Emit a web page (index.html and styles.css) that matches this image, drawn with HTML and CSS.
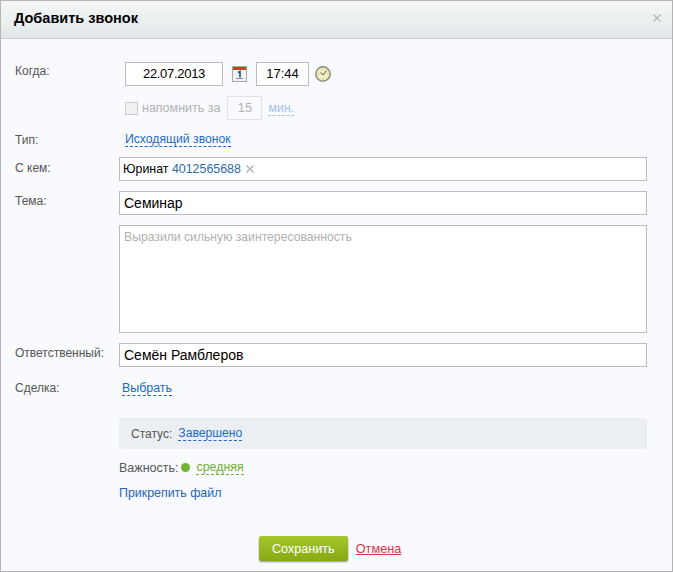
FILE: index.html
```html
<!DOCTYPE html>
<html lang="ru">
<head>
    <meta charset="UTF-8">
    <meta name="viewport" content="width=device-width, initial-scale=1.0">
    <title>Добавить звонок</title>
    <link rel="stylesheet" href="styles.css">
</head>
<body>
<div class="dialog">
    <div class="dialog-head">
        <h2>Добавить звонок</h2>
        <svg class="close-icon" width="8" height="8" viewBox="0 0 8 8">
            <path d="M.5.5l7 7M7.500.5l-7 7" stroke="#b5b5b5" stroke-width="1.200" fill="none"/>
        </svg>
    </div>

    <div class="dialog-body">
        <div class="row row-when">
            <label class="row-label">Когда:</label>
            <div class="when-fields">
                <div class="field field-date">22.07.2013</div>
                <svg class="cal-icon" width="15" height="16" viewBox="0 0 15 16">
                    <rect x=".5" y=".5" width="14" height="15" fill="#f2f2f2" stroke="#a9a9a9"/>
                    <rect x="1" y="1" width="13" height="3" fill="#d9391f"/>
                    <rect x="4" y="12" width="7" height="1" fill="#7d8fa8"/>
                    <path d="M6 6.500l2-1v6" stroke="#1f4f9c" stroke-width="1.600" fill="none"/>
                </svg>
                <div class="field field-time">17:44</div>
                <svg class="clock-icon" width="16" height="16" viewBox="0 0 16 16">
                    <circle cx="8" cy="8" r="7.200" fill="#f2eec0" stroke="#8b8b7e" stroke-width="1.500"/>
                    <path d="M8 9L5.500 6.500M8 9l3.500-4.500" stroke="#55554a" fill="none"/>
                    <path d="M8 2.500v1M8 12.500v1M2.500 8h1M12.500 8h1" stroke="#9a9a88" fill="none"/>
                </svg>
            </div>
        </div>

        <div class="row row-remind">
            <span class="row-label"></span>
            <div class="remind-fields">
                <span class="fake-check"></span>
                <span class="remind-text">напомнить за</span>
                <div class="remind-input">15</div>
                <a class="dash-link link-pale">мин.</a>
            </div>
        </div>

        <div class="row row-type">
            <label class="row-label">Тип:</label>
            <a class="dash-link">Исходящий звонок</a>
        </div>

        <div class="row row-field">
            <label class="row-label label-contact">С кем:</label>
            <div class="field field-wide field-contact">
                Юринат&nbsp;<span class="phone">4012565688</span>
                <svg class="tag-remove" width="8" height="8" viewBox="0 0 8 8">
                    <path d="M.5.500l7 7M7.500.500l-7 7" stroke="#a8adb3" stroke-width="1.200" fill="none"/>
                </svg>
            </div>
        </div>

        <div class="row row-field">
            <label class="row-label">Тема:</label>
            <div class="field field-wide field-big">Семинар</div>
        </div>

        <div class="row row-field">
            <span class="row-label"></span>
            <div class="field field-wide field-area">Выразили сильную заинтересованность</div>
        </div>

        <div class="row row-field">
            <label class="row-label">Ответственный:</label>
            <div class="field field-wide field-big">Семён Рамблеров</div>
        </div>

        <div class="row row-deal">
            <label class="row-label">Сделка:</label>
            <a class="dash-link">Выбрать</a>
        </div>

        <div class="status-bar">
            <span class="status-label">Статус:</span>
            <a class="dash-link">Завершено</a>
        </div>

        <div class="importance">
            <span class="status-label">Важность:</span>
            <span class="dot"></span>
            <a class="dash-link link-green">средняя</a>
        </div>

        <a class="attach-link">Прикрепить файл</a>

        <div class="buttons">
            <button class="save-btn">Сохранить</button>
            <a class="cancel-link">Отмена</a>
        </div>
    </div>
</div>
</body>
</html>
```

FILE: styles.css
```css
html, body {
    margin: 0;
    padding: 0;
}

body {
    font-family: "Liberation Sans", Arial, sans-serif;
    font-size: 12px;
    color: #000;
    background-color: #f8fafd;
}

.dialog {
    box-sizing: border-box;
    width: 673px;
    height: 572px;
    border: 1px solid #b4b4b4;
    background-color: #f8fafd;
}

.dialog-head {
    box-sizing: border-box;
    height: 38px;
    padding: 0 11px 3px 13px;
    display: flex;
    align-items: center;
    justify-content: space-between;
    background: linear-gradient(to bottom, #f5f7f7, #e1e8ea);
    border-bottom: 1px solid #c5d0da;
}

.dialog-head h2 {
    margin: 0;
    font-size: 14.500px;
    font-weight: bold;
}

.dialog-body {
    padding: 23px 25px 0 14px;
}

.row {
    display: flex;
}

.row-label {
    flex: 0 0 104px;
    color: #555;
    line-height: 14px;
}

.field {
    box-sizing: border-box;
    height: 24px;
    line-height: 20px;
    border: 1px solid #bdbdbd;
    padding: 1px 4px;
    background-color: #fff;
    font-size: 13px;
}

.row-when .row-label {
    padding-top: 2px;
}

.when-fields {
    display: flex;
    align-items: center;
    margin-left: 6px;
}

.field-date {
    width: 98px;
    text-align: center;
    letter-spacing: -0.300px;
}

.field-time {
    width: 53px;
    text-align: center;
}

.cal-icon {
    margin: 0 9px;
}

.clock-icon {
    margin-left: 6px;
}

.row-remind {
    margin-top: 10px;
    height: 24px;
}

.remind-fields {
    display: flex;
    align-items: center;
    margin-left: 6px;
    color: #b2b2b2;
}

.fake-check {
    box-sizing: border-box;
    width: 13px;
    height: 13px;
    border: 1px solid #ccc;
    background-color: #f0f0f0;
    margin-right: 4px;
}

.remind-text {
    font-size: 12.500px;
}

.remind-input {
    box-sizing: border-box;
    width: 35px;
    height: 24px;
    line-height: 22px;
    border: 1px solid #e2e2e2;
    text-align: center;
    margin: 0 6px 0 7px;
    font-size: 13px;
}

.dash-link {
    color: #1d6ac8;
    border-bottom: 1px dashed #1d6ac8;
    line-height: 14px;
    align-self: flex-start;
    font-size: 12.200px;
}

.link-pale {
    color: #a3c2e8;
    border-bottom-color: #a3c2e8;
    align-self: center;
    font-size: 12.400px;
}

.link-green {
    color: #6eb12f;
    border-bottom-color: #6eb12f;
    font-size: 12.400px;
}

.row-type {
    margin-top: 12px;
}

.row-type .row-label {
    padding-top: 1px;
}

.row-type .dash-link {
    margin-left: 6px;
}

.row-field {
    margin-top: 10px;
}

.row-field .row-label {
    padding-top: 3px;
}

.row-field .label-contact {
    padding-top: 4px;
}

.field-wide {
    flex: 1;
}

.field-contact {
    font-size: 12.400px;
    display: flex;
    align-items: center;
    padding-left: 3px;
}

.phone {
    color: #2b6ba8;
}

.tag-remove {
    margin-left: 5px;
}

.field-big {
    padding-left: 4px;
    font-size: 14px;
}

.field-area {
    height: 108px;
    font-size: 12.200px;
    color: #b0b0b0;
}

.row-deal {
    margin-top: 14px;
}

.row-deal .dash-link {
    margin-left: 3px;
    font-size: 12.400px;
}

.status-bar {
    box-sizing: border-box;
    height: 31px;
    margin: 22px 0 0 104px;
    padding-left: 12px;
    display: flex;
    align-items: center;
    gap: 6px;
    background-color: #ebeef3;
    border-radius: 2px;
}

.status-bar .dash-link {
    align-self: center;
}

.status-label {
    color: #555;
}

.importance {
    display: flex;
    align-items: center;
    margin: 11px 0 0 104px;
}

.importance .status-label {
    font-size: 12.500px;
}

.importance .dash-link {
    align-self: center;
}

.dot {
    width: 9px;
    height: 9px;
    border-radius: 50%;
    background-color: #6fb52f;
    margin: 0 6px 0 3px;
}

.attach-link {
    display: block;
    margin: 11px 0 0 104px;
    color: #2465b8;
    line-height: 14px;
    font-size: 12.400px;
}

.buttons {
    display: flex;
    align-items: center;
    justify-content: center;
    gap: 8px;
    margin-top: 36px;
    padding-right: 2px;
}

.save-btn {
    box-sizing: border-box;
    width: 89px;
    height: 25px;
    padding: 0;
    border: none;
    border-radius: 2px;
    background: linear-gradient(to bottom, #a4c72a, #86a915);
    box-shadow: 0 1px 2px rgba(0, 0, 0, 0.4);
    color: #fff;
    font-family: inherit;
    font-size: 12.600px;
}

.cancel-link {
    color: #e0324a;
    text-decoration: underline;
    font-size: 12.700px;
}
```
